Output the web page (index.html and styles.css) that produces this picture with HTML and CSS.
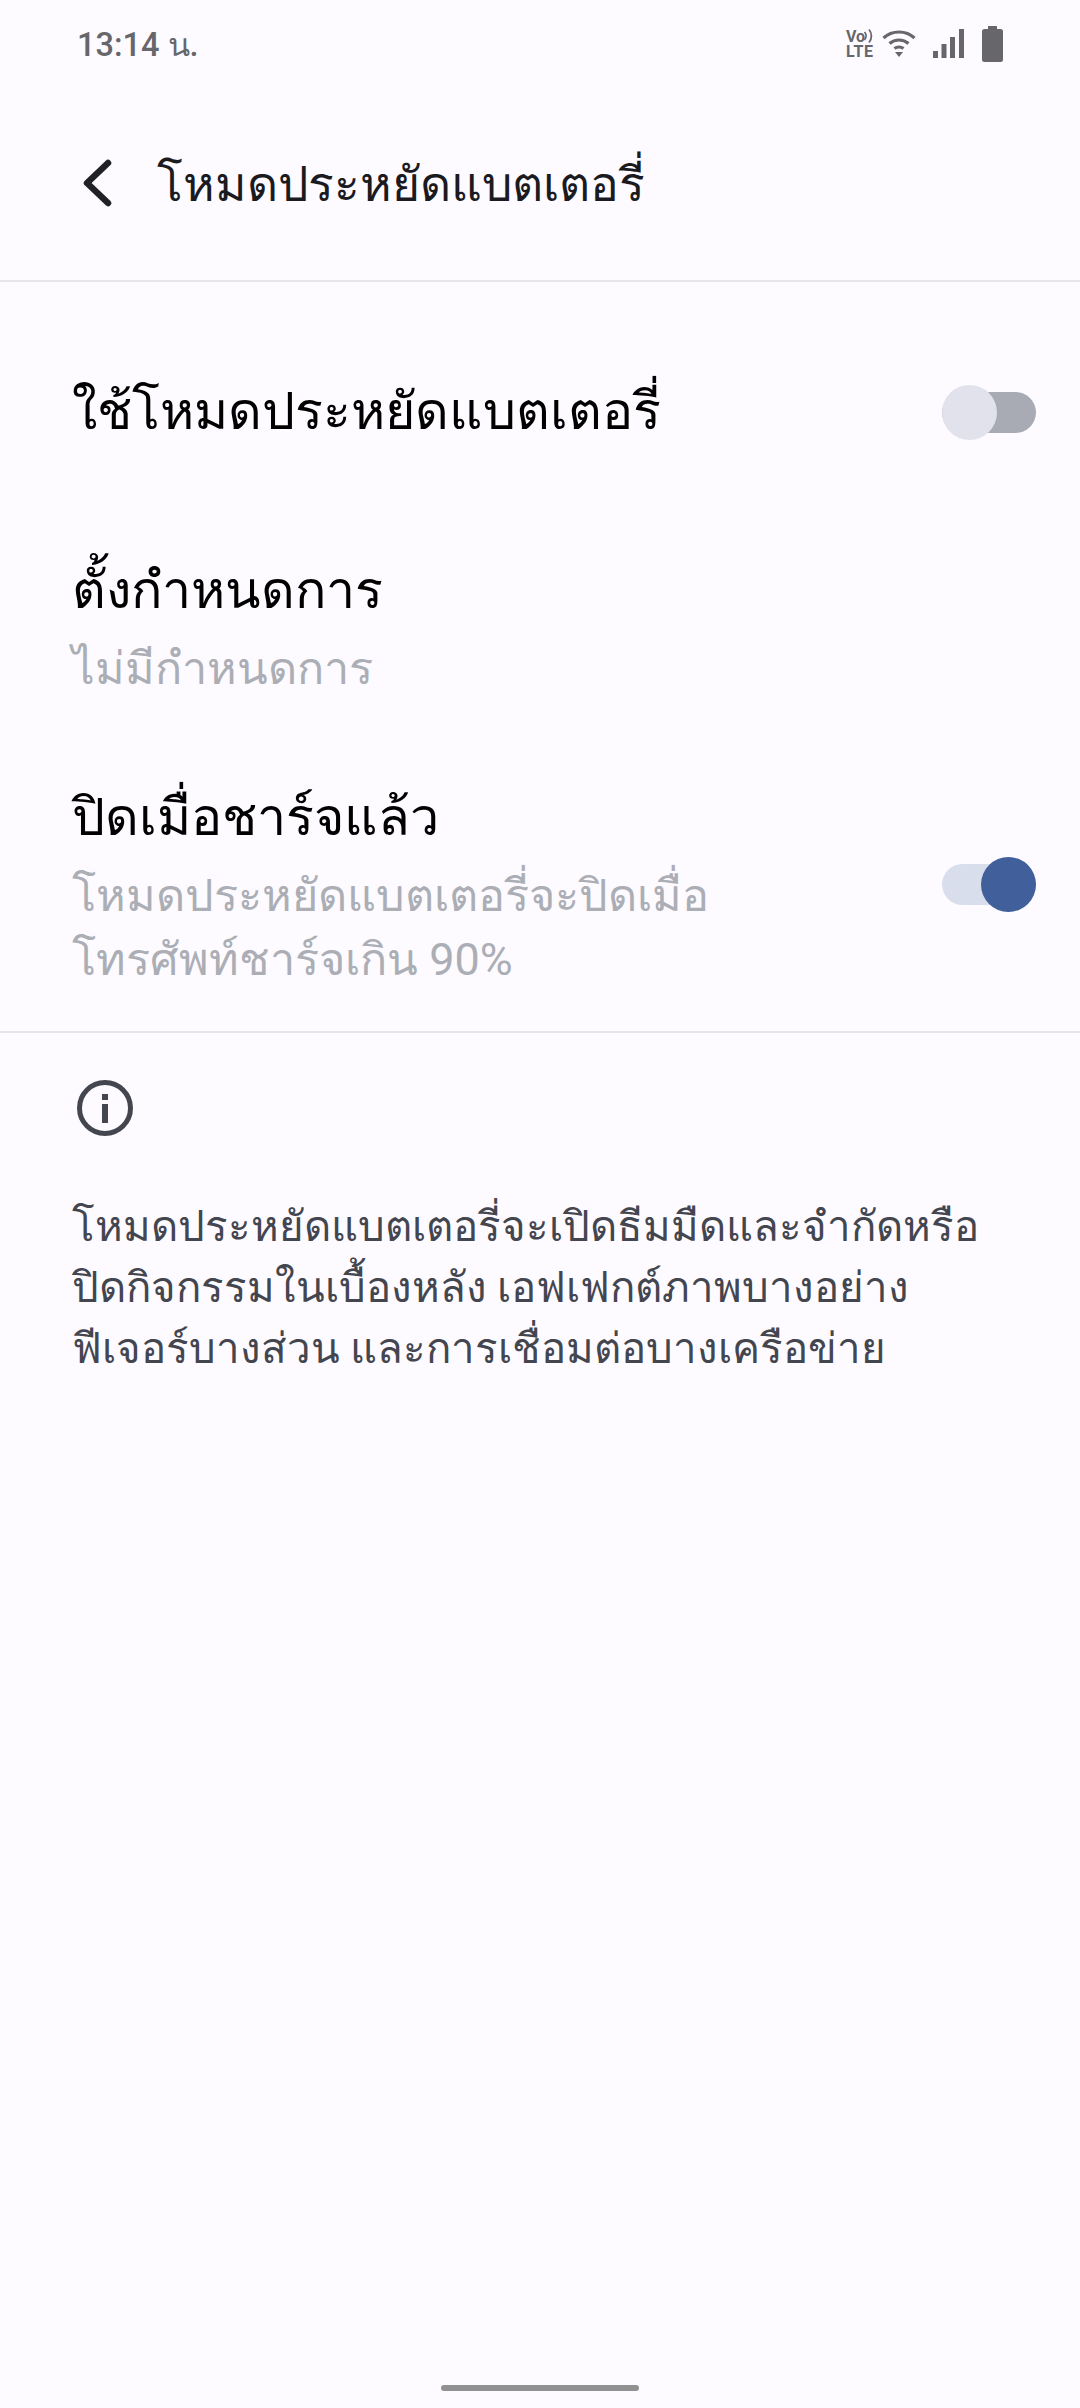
FILE: index.html
```html
<!DOCTYPE html>
<html lang="th">
<head>
    <meta charset="UTF-8">
    <meta name="viewport" content="width=device-width, initial-scale=1.0">
    <title>โหมดประหยัดแบตเตอรี่</title>
    <link rel="stylesheet" href="styles.css">
</head>
<body>
    <div class="status-bar">
        <div class="clock">13:14 น.</div>
        <div class="status-icons">
            <svg class="volte" width="28" height="29" viewBox="0 0 28 29" fill="#67666b">
                <text x="0" y="13">Vo</text>
                <text x="0" y="28" textLength="27">LTE</text>
                <path d="M18.500 3a6 6 0 0 1 0 8M23 0.500a10 10 0 0 1 0 13" fill="none" stroke="#67666b" stroke-width="1.800"/>
            </svg>
            <svg class="wifi" width="34" height="28" viewBox="0 0 34 28" fill="none" stroke="#67666b" stroke-width="3.200"><path d="M1.500 9C10 1 24 1 32.500 9"/><path d="M7.500 14.500C13 9.800 21 9.800 26.500 14.500"/><path d="M12.500 19.500C15 17.500 19 17.500 21.500 19.500"/><path d="M13 23H21L17 28Z" fill="#67666b" stroke="none"/></svg>
            <svg class="signal" width="31" height="29" viewBox="0 0 31 29" fill="#67666b"><rect x="0" y="22" width="5" height="7"/><rect x="8.500" y="15" width="5" height="14"/><rect x="17" y="8" width="5" height="21"/><rect x="26" y="0" width="5" height="29"/></svg>
            <svg class="battery" width="21" height="36" viewBox="0 0 21 36" fill="#67666b"><rect x="6" y="0" width="9" height="5"/><rect x="0" y="3" width="21" height="33" rx="2.500"/></svg>
        </div>
    </div>

    <div class="app-bar">
        <svg class="back" width="32" height="48" viewBox="0 0 32 48" fill="none" stroke="#202124" stroke-width="6.500" stroke-linecap="round" stroke-linejoin="round"><path d="M27 4L6 24L27 44"/></svg>
        <div class="app-title">โหมดประหยัดแบตเตอรี่</div>
    </div>

    <div class="settings">
        <div class="row row-main">
            <div class="row-text"><div class="row-title">ใช้โหมดประหยัดแบตเตอรี่</div></div>
            <div class="switch"></div>
        </div>
        <div class="row row-schedule">
            <div class="row-text">
                <div class="row-title">ตั้งกำหนดการ</div>
                <div class="row-sub">ไม่มีกำหนดการ</div>
            </div>
        </div>
        <div class="row row-charged">
            <div class="row-text">
                <div class="row-title">ปิดเมื่อชาร์จแล้ว</div>
                <div class="row-sub">โหมดประหยัดแบตเตอรี่จะปิดเมื่อ<br>โทรศัพท์ชาร์จเกิน 90%</div>
            </div>
            <div class="switch on"></div>
        </div>
    </div>

    <div class="info">
        <svg class="info-icon" width="58" height="58" viewBox="0 0 58 58" fill="none"><circle cx="29" cy="29" r="25.500" stroke="#44464f" stroke-width="5"/><rect x="26" y="15" width="6" height="6" fill="#44464f"/><rect x="26" y="25" width="6" height="19" fill="#44464f"/></svg>
        <p class="info-text">โหมดประหยัดแบตเตอรี่จะเปิดธีมมืดและจำกัดหรือ<br>ปิดกิจกรรมในเบื้องหลัง เอฟเฟกต์ภาพบางอย่าง<br>ฟีเจอร์บางส่วน และการเชื่อมต่อบางเครือข่าย</p>
    </div>

    <div class="gesture-bar"></div>
</body>
</html>
```

FILE: styles.css
```css
* {
    margin: 0;
    padding: 0;
    box-sizing: border-box;
}

body {
    width: 1080px;
    height: 2408px;
    background: #fdfbff;
    font-family: Roboto, "Noto Sans", sans-serif;
    color: #1b1b1f;
    display: flex;
    flex-direction: column;
    overflow: hidden;
}

.status-bar {
    height: 90px;
    padding: 24px 77px 0 77px;
    display: flex;
    justify-content: space-between;
    align-items: flex-start;
    flex-shrink: 0;
}

.clock {
    font-size: 32.500px;
    line-height: 42px;
    font-weight: 500;
    color: #67666b;
}

.status-icons {
    display: flex;
    align-items: flex-start;
    padding-top: 5px;
}

.volte {
    font-size: 16px;
    font-weight: 700;
    overflow: visible;
}

.wifi { margin-left: 8px; }
.signal { margin-left: 17px; }
.battery { margin: -3px 0 0 18px; }

.app-bar {
    height: 192px;
    padding: 0 0 0 81px;
    display: flex;
    align-items: center;
    gap: 44px;
    border-bottom: 2px solid #e6e5e9;
    flex-shrink: 0;
}

.back { margin-bottom: 4px; }

.app-title {
    font-size: 48px;
    line-height: 64px;
}

.settings {
    padding-top: 48px;
    border-bottom: 2px solid #e6e5e9;
    height: 751px;
    flex-shrink: 0;
}

.row {
    display: flex;
    justify-content: space-between;
    padding: 0 44px 0 72px;
}

.row-main {
    height: 164px;
    align-items: center;
}

.row-schedule { padding-top: 62px; padding-bottom: 41px; }
.row-charged { padding-top: 41px; }
.row-charged .switch { margin-top: 81px; }

.row-title {
    font-size: 52px;
    line-height: 70px;
    color: #000;
}

.row-sub {
    margin-top: 11px;
    font-size: 45px;
    line-height: 64px;
    color: #acaeb5;
}

.switch {
    position: relative;
    width: 94px;
    height: 41px;
    border-radius: 21px;
    background: #a8abb4;
    flex-shrink: 0;
}

.switch::after {
    content: "";
    position: absolute;
    left: 0;
    top: -7px;
    width: 55px;
    height: 55px;
    border-radius: 50%;
    background: #e1e2ec;
}

.switch.on { background: #d9deec; }

.switch.on::after {
    left: 39px;
    background: #415f9a;
}

.info {
    padding: 46px 72px 0;
    flex: 1;
}

.info-icon { display: block; margin-left: 4px; }

.info-text {
    margin-top: 59px;
    font-size: 42px;
    line-height: 61px;
    color: #44464f;
    white-space: nowrap;
}

.gesture-bar {
    width: 198px;
    height: 6px;
    border-radius: 3px;
    background: #919191;
    margin: 0 auto 17px;
    flex-shrink: 0;
}
```
